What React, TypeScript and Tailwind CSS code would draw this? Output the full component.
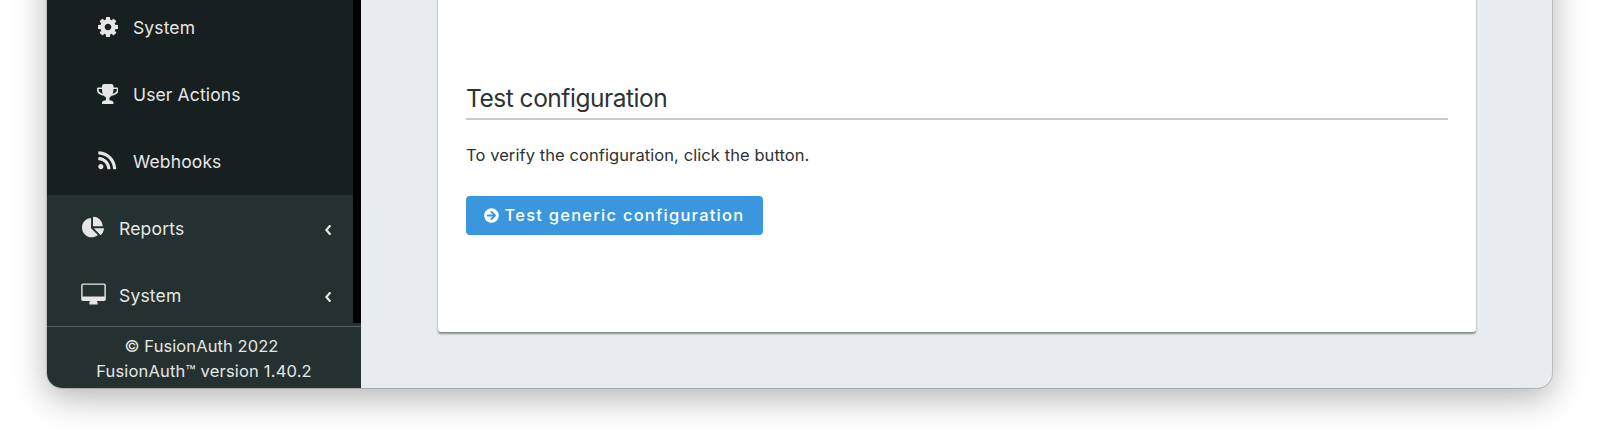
import React from "react";
import { FaArrowCircleRight, FaChartPie, FaRss } from "react-icons/fa";

const Cog = () => (
  <svg viewBox="0 128 1536 1536" fill="currentColor" className="size-[20px]">
    <path d="M1024 896q0-106-75-181t-181-75-181 75-75 181 75 181 181 75 181-75 75-181zm512-109v222q0 12-8 23t-20 13l-185 28q-19 54-39 91 35 50 107 138 10 12 10 25t-9 23q-27 37-99 108t-94 71q-12 0-26-9l-138-108q-44 23-91 38-16 136-29 186-7 28-36 28h-222q-14 0-24.5-8.5t-11.5-21.5l-28-184q-49-16-90-37l-141 107q-10 9-25 9-14 0-25-11-126-114-165-168-7-10-7-23 0-12 8-23 15-21 51-66.5t54-70.5q-27-50-41-99l-183-27q-13-2-21-12.5t-8-23.5v-222q0-12 8-23t19-13l186-28q14-46 39-92-40-57-107-138-10-12-10-24 0-10 9-23 26-36 98.5-107.5t94.5-71.5q13 0 26 10l138 107q44-23 91-38 16-136 29-186 7-28 36-28h222q14 0 24.5 8.5t11.5 21.5l28 184q49 16 90 37l142-107q9-9 24-9 13 0 25 10 129 119 165 170 7 8 7 22 0 12-8 23-15 21-51 66.5t-54 70.5q26 50 41 98l183 28q13 2 21 12.5t8 23.5z" />
  </svg>
);

const Trophy = () => (
  <svg viewBox="64 128 1664 1536" fill="currentColor" className="h-[20px] w-[21.5px]">
    <path d="M522 883q-74-162-74-371h-256v96q0 78 94.5 162t235.5 113zm1078-275v-96h-256q0 209-74 371 141-29 235.5-113t94.5-162zm128-128v128q0 71-41.5 143t-112 130-173 97.5-215.5 44.5q-42 54-95 95-38 34-52.5 72.5t-14.5 89.5q0 54 30.5 91t97.5 37q75 0 133.5 45.5t58.5 114.5v64q0 14-9 23t-23 9h-832q-14 0-23-9t-9-23v-64q0-69 58.5-114.5t133.5-45.5q67 0 97.5-37t30.5-91q0-51-14.5-89.5t-52.5-72.5q-53-41-95-95-113-5-215.5-44.5t-173-97.5-112-130-41.5-143v-128q0-40 28-68t68-28h288v-96q0-66 47-113t113-47h576q66 0 113 47t47 113v96h288q40 0 68 28t28 68z" />
  </svg>
);

const Monitor = () => (
  <svg viewBox="0 0 25 22" fill="currentColor" className="h-[22px] w-[25px]">
    <path
      fillRule="evenodd"
      d="M2 .4h21A1.8 1.8 0 0 1 24.8 2.2V16.3A1.8 1.8 0 0 1 23 18.1H16L16.6 20.2V21.4H8.300V20.2L8.900 18.1H2A1.8 1.8 0 0 1 .2 16.3V2.2A1.8 1.8 0 0 1 2 .4ZM2.100 1.7a.5.5 0 0 0-.5.5V13.4H23.4V2.2a.5.5 0 0 0-.5-.5Z"
    />
  </svg>
);

const Chevron = () => (
  <svg viewBox="0 0 8 10" fill="none" stroke="currentColor" strokeWidth="2.2" className="mt-[3px] h-[10px] w-[8px]">
    <path d="M6.400 .3 2.400 5l4 4.700" />
  </svg>
);

function SubItem({ icon, label }: { icon: React.ReactNode; label: string }) {
  return (
    <li className="flex h-[67px] items-center pl-[48.500px]">
      <span className="mb-[2px] flex w-[24px] justify-center">{icon}</span>
      <span className="mt-[2px] ml-[13.500px] text-[17.5px] tracking-[0.13px]">{label}</span>
    </li>
  );
}

function Section({ icon, label }: { icon: React.ReactNode; label: string }) {
  return (
    <li className="flex h-[67px] items-center pr-[21px] pl-[33.500px]">
      <span className="mb-[4px] flex w-[25px] justify-center">{icon}</span>
      <span className="mt-[2px] ml-[13.500px] grow text-[17.5px] tracking-[0.18px]">{label}</span>
      <Chevron />
    </li>
  );
}

export default function App() {
  return (
    <div className="h-[447px] w-[1600px] overflow-hidden bg-white pr-[48px] pl-[47px] font-['Inter',sans-serif] text-[#e6e6e6]">
      <div className="-mt-[100px] flex h-[488px] overflow-hidden rounded-b-[15px] bg-[#e7ecf0] pt-[100px] shadow-[0_0_0_1px_rgba(0,0,0,0.14),0_10px_34px_rgba(0,0,0,0.3)]">
        <aside className="-mt-[100px] flex w-[314px] shrink-0 flex-col bg-[#253130] pt-[100px]">
          <div className="-mt-[100px] flex h-[423px] shrink-0 overflow-hidden">
            <nav className="w-[306px]">
              <ul className="h-[295px] bg-[#181f20] pt-[94px]">
                <SubItem icon={<Cog />} label="System" />
                <SubItem icon={<Trophy />} label="User Actions" />
                <SubItem icon={<FaRss className="size-[20.5px]" />} label="Webhooks" />
              </ul>
              <ul>
                <Section icon={<FaChartPie className="size-[22px]" />} label="Reports" />
                <Section icon={<Monitor />} label="System" />
              </ul>
            </nav>
            <div className="grow bg-black" />
          </div>
          <footer className="mt-[3px] border-t border-[#56605f] pt-[7px] text-center text-[16.5px] leading-[25px]">
            <p className="pr-[5px] tracking-[0.09px]">© FusionAuth 2022</p>
            <p className="tracking-[0.18px]">FusionAuth™ version 1.40.2</p>
          </footer>
        </aside>
        <main className="grow pr-[76px] pl-[77px] text-[#2c3333]">
          <section className="-mt-[100px] h-[432px] rounded-[3px] bg-white px-[28px] pt-[181px] shadow-[0_2px_2px_rgba(0,0,0,0.4),0_0_2px_rgba(0,0,0,0.12)]">
            <h2 className="h-[39px] border-b-2 border-[#c8c9c9] text-[24.5px] leading-[34px] tracking-[-0.48px]">
              Test configuration
            </h2>
            <p className="mt-[23px] text-[16.5px] leading-[25px] tracking-[0.08px]">
              To verify the configuration, click the button.
            </p>
            <button className="mt-[28px] flex h-[39px] w-[297px] items-center rounded-[4px] bg-[#3a97dd] pl-[17.500px] text-[16.5px] font-medium tracking-[1.24px] text-white">
              <FaArrowCircleRight className="mr-[6px] size-[15px]" />
              Test generic configuration
            </button>
          </section>
        </main>
      </div>
    </div>
  );
}
